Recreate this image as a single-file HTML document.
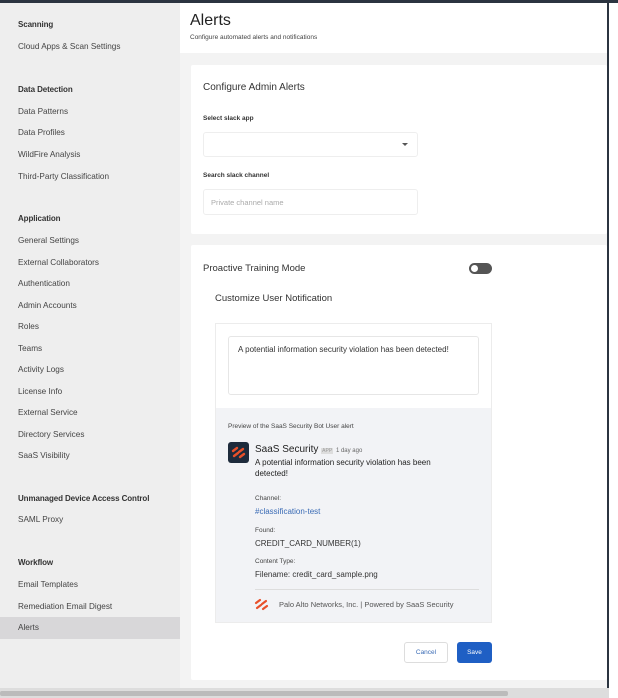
<!DOCTYPE html>
<html><head><meta charset="utf-8"><style>
*{margin:0;padding:0;box-sizing:border-box}
body{width:618px;height:698px;overflow:hidden;background:#f3f3f3;font-family:"Liberation Sans",sans-serif;color:#333;position:relative}
.a{position:absolute;white-space:nowrap}
.s{font-size:8.2px;color:#444;left:18px}
.h{font-size:8px;font-weight:bold;color:#333;left:18px;letter-spacing:-0.1px}
</style></head><body>
<div class="a" style="left:0;top:0;width:618px;height:3px;background:#2b3440"></div>
<div class="a" style="left:0;top:3px;width:180px;height:685px;background:#eeeeee"></div>
<div class="a" style="left:0;top:617px;width:180px;height:22px;background:#d8d7d9"></div>
<div class="a h" style="top:20px">Scanning</div>
<div class="a s" style="top:42px">Cloud Apps &amp; Scan Settings</div>
<div class="a h" style="top:85px">Data Detection</div>
<div class="a s" style="top:107px">Data Patterns</div>
<div class="a s" style="top:128px">Data Profiles</div>
<div class="a s" style="top:150px">WildFire Analysis</div>
<div class="a s" style="top:172px">Third-Party Classification</div>
<div class="a h" style="top:214px">Application</div>
<div class="a s" style="top:236px">General Settings</div>
<div class="a s" style="top:258px">External Collaborators</div>
<div class="a s" style="top:279px">Authentication</div>
<div class="a s" style="top:301px">Admin Accounts</div>
<div class="a s" style="top:322px">Roles</div>
<div class="a s" style="top:344px">Teams</div>
<div class="a s" style="top:365px">Activity Logs</div>
<div class="a s" style="top:387px">License Info</div>
<div class="a s" style="top:408px">External Service</div>
<div class="a s" style="top:430px">Directory Services</div>
<div class="a s" style="top:451px">SaaS Visibility</div>
<div class="a h" style="top:494px">Unmanaged Device Access Control</div>
<div class="a s" style="top:515px">SAML Proxy</div>
<div class="a h" style="top:558px">Workflow</div>
<div class="a s" style="top:580px">Email Templates</div>
<div class="a s" style="top:602px">Remediation Email Digest</div>
<div class="a s" style="top:623px">Alerts</div>

<div class="a" style="left:180px;top:3px;width:427px;height:50px;background:#fff"></div>
<div class="a" style="left:190px;top:12px;font-size:16px;color:#222">Alerts</div>
<div class="a" style="left:190px;top:34px;font-size:6.5px;color:#444">Configure automated alerts and notifications</div>

<div class="a" style="left:191px;top:65px;width:416px;height:169px;background:#fff;border-radius:2px"></div>
<div class="a" style="left:203px;top:82px;font-size:10px;color:#333">Configure Admin Alerts</div>
<div class="a" style="left:203px;top:115px;font-size:6.5px;font-weight:bold;color:#333">Select slack app</div>
<div class="a" style="left:203px;top:132px;width:215px;height:25px;border:1px solid #eee;border-radius:3px;background:#fff"></div>
<div class="a" style="left:402px;top:143px;width:0;height:0;border-left:3px solid transparent;border-right:3px solid transparent;border-top:3px solid #555"></div>
<div class="a" style="left:203px;top:172px;font-size:6.5px;font-weight:bold;color:#333">Search slack channel</div>
<div class="a" style="left:203px;top:189px;width:215px;height:26px;border:1px solid #eee;border-radius:3px;background:#fff"></div>
<div class="a" style="left:211px;top:198px;font-size:7.5px;color:#aaa">Private channel name</div>

<div class="a" style="left:191px;top:245px;width:416px;height:435px;background:#fff;border-radius:2px"></div>
<div class="a" style="left:203px;top:263px;font-size:9.5px;color:#333">Proactive Training Mode</div>
<div class="a" style="left:469px;top:263px;width:23px;height:11px;border-radius:6px;background:#555"></div>
<div class="a" style="left:471px;top:265px;width:7px;height:7px;border-radius:50%;background:#fff"></div>
<div class="a" style="left:215px;top:293px;font-size:9.5px;color:#333">Customize User Notification</div>

<div class="a" style="left:215px;top:323px;width:277px;height:300px;background:#f2f3f6;border:1px solid #ececec"></div>
<div class="a" style="left:216px;top:324px;width:275px;height:84px;background:#fff"></div>
<div class="a" style="left:228px;top:336px;width:251px;height:59px;border:1px solid #e6e6e6;border-radius:3px;background:#fff"></div>
<div class="a" style="left:238px;top:345px;font-size:8px;color:#333">A potential information security violation has been detected!</div>
<div class="a" style="left:228px;top:423px;font-size:6.5px;color:#444">Preview of the SaaS Security Bot User alert</div>
<div class="a" style="left:228px;top:442px;width:21px;height:21px;border-radius:3px;background:#1e2b3c"></div>
<svg class="a" style="left:230px;top:446px" width="17" height="13" viewBox="0 0 17 13"><g stroke="#e8502a" stroke-width="2.4" stroke-linecap="round"><path d="M3 5l4-3M9 6l4-3M4 10l4-3M10 11l4-3"/></g></svg>
<div class="a" style="left:255px;top:444px;font-size:10px;color:#222">SaaS Security <span style="font-size:5px;color:#999;background:#ddd;padding:0 1px">APP</span> <span style="font-size:6px;color:#666">1 day ago</span></div>
<div class="a" style="left:255px;top:458px;font-size:8px;color:#222;line-height:10.5px;white-space:normal;width:195px">A potential information security violation has been detected!</div>
<div class="a" style="left:255px;top:495px;font-size:6.5px;color:#444">Channel:</div>
<div class="a" style="left:255px;top:507px;font-size:8px;color:#3a6bb5">#classification-test</div>
<div class="a" style="left:255px;top:527px;font-size:6.5px;color:#444">Found:</div>
<div class="a" style="left:255px;top:539px;font-size:8px;color:#333">CREDIT_CARD_NUMBER(1)</div>
<div class="a" style="left:255px;top:558px;font-size:6.5px;color:#444">Content Type:</div>
<div class="a" style="left:255px;top:570px;font-size:8px;color:#333">Filename: credit_card_sample.png</div>
<div class="a" style="left:255px;top:589px;width:224px;height:1px;background:#ddd"></div>
<svg class="a" style="left:254px;top:598px" width="17" height="13" viewBox="0 0 17 13"><g stroke="#e8502a" stroke-width="2.2" stroke-linecap="round"><path d="M2 5l4-3M8 6l4-3M3 10l4-3M9 11l4-3"/></g></svg>
<div class="a" style="left:279px;top:600px;font-size:7.5px;color:#555">Palo Alto Networks, Inc. | Powered by SaaS Security</div>

<div class="a" style="left:404px;top:642px;width:44px;height:21px;border:1px solid #ddd;border-radius:3px;background:#fff;font-size:6.5px;color:#3a6bb5;text-align:center;line-height:19px">Cancel</div>
<div class="a" style="left:457px;top:642px;width:35px;height:21px;border-radius:3px;background:#1f5fc4;font-size:6.5px;color:#fff;text-align:center;line-height:21px">Save</div>

<div class="a" style="left:607px;top:0;width:2px;height:698px;background:#2b3440"></div>
<div class="a" style="left:609px;top:3px;width:9px;height:695px;background:#fff"></div>
<div class="a" style="left:0;top:688px;width:609px;height:10px;background:#ddd"></div>
<div class="a" style="left:0;top:691px;width:508px;height:5px;background:#bbb;border-radius:2px"></div>
</body></html>
